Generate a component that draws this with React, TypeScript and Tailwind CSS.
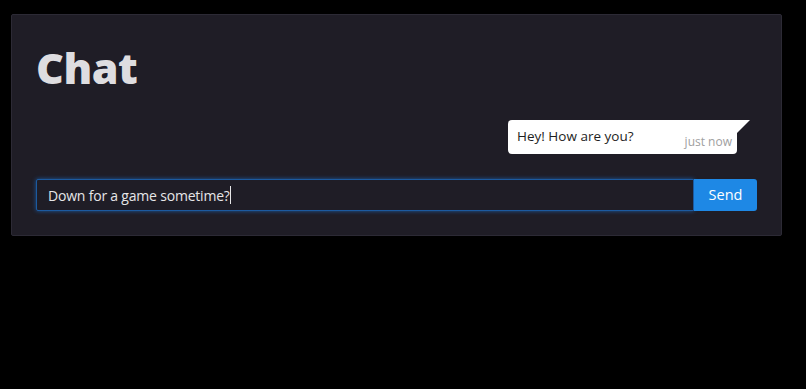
export default function App() {
  return (
    <div className="min-h-screen bg-black pt-[14px] pl-[11px]" style={{ fontFamily: '"Open Sans", "Noto Sans", sans-serif' }}>
      <div className="w-[771px] h-[222px] bg-[#1f1d26] border border-[#2c2a35] rounded-[2px] px-[24px] pt-[27px]">
        <h1 className="text-[43px] leading-[52px] font-extrabold text-[#dedde0] tracking-[-0.5px]">Chat</h1>

        {/* Messages */}
        <div className="flex justify-end mt-[26px] pr-[20px]">
          <div className="relative">
            <div className="w-[229px] h-[34px] bg-white rounded-[4px] rounded-tr-none flex items-start justify-between pl-[9px] pr-[5px]">
              <span className="text-[13.5px] leading-[20px] mt-[6px] text-[#1e1e1e]">Hey! How are you?</span>
              <span className="text-[12px] leading-[16px] mt-[14px] text-[#a0a0a0]">just now</span>
            </div>
            <svg className="absolute top-0 left-[228px]" width="14" height="14" viewBox="0 0 14 14">
              <polygon points="0,0 14,0 0,14" fill="#ffffff" />
            </svg>
          </div>
        </div>

        {/* Input */}
        <div className="flex mt-[25px]">
          <div className="flex-1 h-[32px] border border-[#1c5aa0] shadow-[0_0_4px_#1c5aa0] rounded-l-[2px] bg-[#1f1d26] flex items-center pl-[11px]">
            <span className="text-[14px] tracking-[-0.2px] text-[#e6e6e8]">Down for a game sometime?</span>
            <span className="w-[1px] h-[18px] bg-[#e6e6e8]" />
          </div>
          <button className="w-[63px] h-[32px] bg-[#1e88e5] text-white text-[14.5px] rounded-r-[3px]">Send</button>
        </div>
      </div>
    </div>
  );
}
